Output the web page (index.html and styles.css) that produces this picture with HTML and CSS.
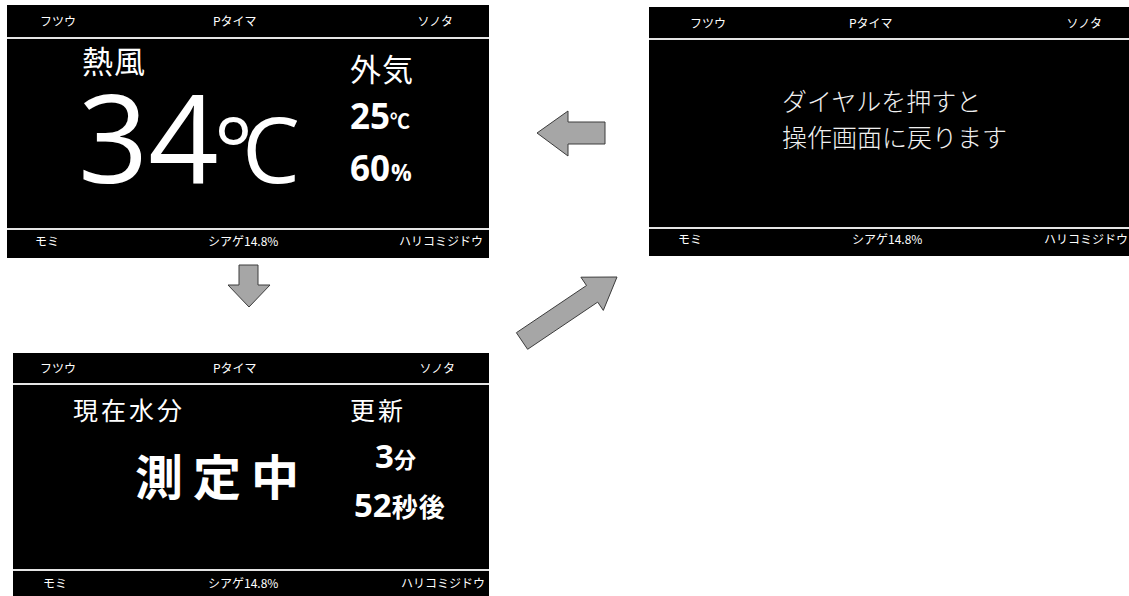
FILE: index.html
```html
<!DOCTYPE html>
<html lang="ja">
<head>
  <meta charset="UTF-8">
  <title>乾燥機 表示画面</title>
  <link rel="stylesheet" href="styles.css">
</head>
<body>
  <div class="canvas">

    <!-- 運転画面 -->
    <section class="screen fan">
      <div class="bar top">
        <span>フツウ</span><span>Pタイマ</span><span>ソノタ</span>
      </div>
      <div class="rule"></div>
      <div class="body">
        <div class="main">
          <div class="label">熱風</div>
          <div class="temp"><span class="num">34</span><span class="deg">°C</span></div>
        </div>
        <div class="side">
          <div class="label">外気</div>
          <div class="val">25<small>℃</small></div>
          <div class="val">60<small class="pct">%</small></div>
        </div>
      </div>
      <div class="rule"></div>
      <div class="bar bottom">
        <span>モミ</span><span>シアゲ14.8%</span><span>ハリコミジドウ</span>
      </div>
    </section>

    <!-- 案内画面 -->
    <section class="screen msg">
      <div class="bar top">
        <span>フツウ</span><span>Pタイマ</span><span>ソノタ</span>
      </div>
      <div class="rule"></div>
      <div class="body">
        <p class="text">ダイヤルを押すと<br>操作画面に戻ります</p>
      </div>
      <div class="rule"></div>
      <div class="bar bottom">
        <span>モミ</span><span>シアゲ14.8%</span><span>ハリコミジドウ</span>
      </div>
    </section>

    <!-- 水分測定画面 -->
    <section class="screen measure">
      <div class="bar top">
        <span>フツウ</span><span>Pタイマ</span><span>ソノタ</span>
      </div>
      <div class="rule"></div>
      <div class="body">
        <div class="main">
          <div class="label">現在水分</div>
          <div class="status">測定中</div>
        </div>
        <div class="side">
          <div class="label">更新</div>
          <div class="val first">3<small>分</small></div>
          <div class="val second">52<small>秒後</small></div>
        </div>
      </div>
      <div class="rule"></div>
      <div class="bar bottom">
        <span>モミ</span><span>シアゲ14.8%</span><span>ハリコミジドウ</span>
      </div>
    </section>

    <svg class="arrows" width="1129" height="596" viewBox="0 0 1129 596">
      <polygon points="537,133 568,111 568,122 605,122 605,144 568,144 568,156"/>
      <polygon points="239,265 258,265 258,285 270,285 249,307 228,285 239,285"/>
      <polygon points="516.4,332.7 586.5,285.5 580.9,277.2 617,277 603.3,310.4 597.7,302.1 527.6,349.3"/>
    </svg>
  </div>
</body>
</html>
```

FILE: styles.css
```css
body {
  margin: 0;
  background: #fff;
  font-family: "Noto Sans CJK JP", sans-serif;
}

.canvas {
  position: relative;
  width: 1129px;
  height: 596px;
  box-sizing: border-box;
  padding: 5px 0 0 7px;
  overflow: hidden;
  display: grid;
  grid-template-columns: 482px 480px;
  grid-template-rows: 253px 243px;
  column-gap: 160px;
  row-gap: 95px;
}

.screen {
  background: #000;
  color: #fff;
  display: flex;
  flex-direction: column;
}

.screen.fan {
  --th: 32px; --hl: 33px; --hm: 173px; --hr: 36px;
  --bh: 28px; --bp: 3px; --fl: 28px; --fm: 173px; --fr: 6px;
}
.screen.msg {
  margin-top: 2px;
  height: 249px;
  --th: 31px; --hl: 41px; --hm: 159px; --hr: 27px;
  --bh: 27px; --bp: 2px; --fl: 29px; --fm: 174px; --fr: 1px;
}
.screen.measure {
  grid-column: 1;
  grid-row: 2;
  margin-left: 6px;
  --th: 30px; --hl: 27px; --hm: 173px; --hr: 34px;
  --bh: 25px; --bp: 4px; --fl: 30px; --fm: 165px; --fr: 4px;
}

.bar {
  display: grid;
  box-sizing: border-box;
  font-size: 12px;
  line-height: 16px;
  white-space: nowrap;
  flex: none;
}
.bar.top {
  height: var(--th);
  align-items: center;
  padding: 0 var(--hr) 0 var(--hl);
  grid-template-columns: var(--hm) 1fr auto;
}
.bar.bottom {
  height: var(--bh);
  align-items: start;
  padding: var(--bp) var(--fr) 0 var(--fl);
  grid-template-columns: var(--fm) 1fr auto;
}

.rule {
  height: 2px;
  background: #e4e4e4;
  flex: none;
}

.body {
  flex: 1;
  display: grid;
}

.label {
  font-size: 31px;
  line-height: 31px;
  letter-spacing: 1px;
  white-space: nowrap;
}

/* 運転画面 */
.fan .body { grid-template-columns: 343px 1fr; }
.fan .main { padding: 5px 0 0 71px; }
.fan .main .label { padding-left: 4px; }
.fan .side { padding-top: 13px; }

.temp {
  margin-top: 4px;
  font: 400 123px/113px "Open Sans", sans-serif;
  white-space: nowrap;
}
.temp .deg {
  font-size: 92px;
  line-height: 1;
  letter-spacing: -11px;
  margin-left: -5px;
}

.val {
  font: 700 35px/52px "Open Sans", sans-serif;
  white-space: nowrap;
}
.val small {
  font-family: "Noto Sans CJK JP", sans-serif;
  font-size: 20px;
  line-height: 1;
}
.val small.pct {
  font-family: "Open Sans", sans-serif;
  font-size: 23px;
  margin-left: 1px;
}
.fan .val:nth-child(2) { margin-top: 7px; }

/* 案内画面 */
.text {
  margin: 0;
  padding: 42px 0 0 133px;
  font-size: 25px;
  font-weight: 300;
  line-height: 36px;
  color: #f0f0f0;
}

/* 水分測定画面 */
.measure .body { grid-template-columns: 337px 1fr; }
.measure .main { padding: 12px 0 0 60px; }
.measure .side { padding-top: 12px; }
.measure .label {
  font-size: 25px;
  line-height: 25px;
  letter-spacing: 3px;
}

.status {
  margin-top: 28px;
  padding-left: 62px;
  font-size: 48px;
  font-weight: 700;
  line-height: 48px;
  letter-spacing: 10px;
  white-space: nowrap;
}

.measure .val {
  font-size: 33px;
  line-height: 49px;
}
.measure .val small { font-size: 22px; font-weight: 700; }
.measure .val.first { margin-top: 9px; padding-left: 25px; }
.measure .val.second { padding-left: 4px; }
.measure .val.second small { font-size: 26px; letter-spacing: 1px; }

/* 矢印 */
.arrows {
  position: absolute;
  left: 0;
  top: 0;
  pointer-events: none;
}
.arrows polygon {
  fill: #a6a6a6;
  stroke: #3c3c3c;
  stroke-width: 1;
}
```
